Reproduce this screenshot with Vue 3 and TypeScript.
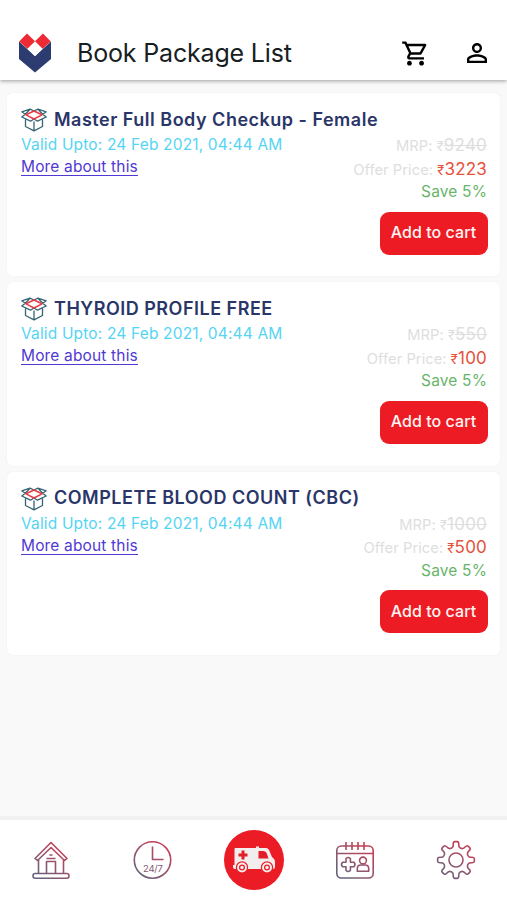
<script setup lang="ts">
interface HealthPackage {
  name: string
  validUpto: string
  mrp: number
  offer: number
  save: number
}

const packages: HealthPackage[] = [
  { name: 'Master Full Body Checkup - Female', validUpto: '24 Feb 2021, 04:44 AM', mrp: 9240, offer: 3223, save: 5 },
  { name: 'THYROID PROFILE FREE', validUpto: '24 Feb 2021, 04:44 AM', mrp: 550, offer: 100, save: 5 },
  { name: 'COMPLETE BLOOD COUNT (CBC)', validUpto: '24 Feb 2021, 04:44 AM', mrp: 1000, offer: 500, save: 5 },
]

// Outline of an eight-toothed gear centred on (20, 20).
function gearPath(): string {
  const at = (r: number, deg: number): string => {
    const a = (deg * Math.PI) / 180
    return `${(20 + r * Math.sin(a)).toFixed(2)} ${(20 - r * Math.cos(a)).toFixed(2)}`
  }
  let d = `M${at(13.2, -15)}`
  for (let i = 0; i < 8; i++) {
    const c = i * 45
    d += ` Q${at(14, c - 11)} ${at(15.8, c - 10)} Q${at(18.4, c - 9)} ${at(18.4, c - 4)}`
    d += ` L${at(18.4, c + 4)} Q${at(18.4, c + 9)} ${at(15.8, c + 10)}`
    d += ` Q${at(14, c + 11)} ${at(13.2, c + 15)} Q${at(12.2, c + 22.5)} ${at(13.2, c + 30)}`
  }
  return d + 'Z'
}
const gear = gearPath()
</script>

<template>
  <div class="screen">
    <header class="bar">
      <svg class="logo" viewBox="0 0 34 40" width="34" height="40">
        <path d="M1 8.500V26L17 39.500L33 26V8.500L17 23Z" fill="#2c3c71" />
        <path d="M17 9L24.500 16L17 23.200L9.500 16Z" fill="#fff" />
        <path d="M9 .5L17 8.200L9.400 15.800L1.200 8.400ZM25 .5L17 8.200L24.600 15.800L32.800 8.400Z" fill="#ee2b34" />
      </svg>
      <h1>Book Package List</h1>
      <svg class="cart" viewBox="0 0 24 24" width="29" height="29">
        <path d="M15.550 13c.75 0 1.410-.41 1.750-1.030l3.580-6.490A.996.996 0 0 0 20.010 4H5.210l-.94-2H1v2h2l3.600 7.590-1.350 2.440C4.520 15.370 5.480 17 7 17h12v-2H7l1.100-2h7.450zM6.160 6h12.150l-2.760 5H8.530L6.160 6zM7 18c-1.100 0-1.990.9-1.990 2S5.900 22 7 22s2-.9 2-2-.9-2-2-2zm10 0c-1.100 0-1.990.9-1.990 2s.89 2 1.990 2 2-.9 2-2-.9-2-2-2z" />
      </svg>
      <svg class="person" viewBox="0 0 24 24" width="30" height="30">
        <path d="M12 5.900a2.100 2.100 0 1 1 0 4.200 2.100 2.100 0 0 1 0-4.200m0 9c2.970 0 6.100 1.460 6.100 2.100v1.100H5.900V17c0-.64 3.130-2.100 6.100-2.100M12 4C9.790 4 8 5.790 8 8s1.790 4 4 4 4-1.790 4-4-1.790-4-4-4zm0 9c-2.670 0-8 1.340-8 4v3h16v-3c0-2.660-5.330-4-8-4z" />
      </svg>
    </header>

    <main class="list">
      <article v-for="p in packages" :key="p.name" class="card">
        <div class="heading">
          <svg viewBox="0 0 26 24" width="26" height="24" fill="none" stroke-width="1.300" stroke-linejoin="round">
            <path d="M4.500 11.500V18.500L13 22.800L21.500 18.500V11.500M13 13.500V22.800M4.300 6.200L9 1.200L13 3L17 1.200L21.700 6.200M4.300 6.200L.8 3.800L9 1.200M21.700 6.200L25.200 3.800L17 1.200M4.300 6.200L.8 9L9.500 13.200L13 11M21.700 6.200L25.200 9L16.500 13.200L13 11" stroke="#356473" />
            <path d="M13 3L21 6.800L13 11L5 6.800Z" stroke="#ea3b43" stroke-width="1.500" />
          </svg>
          <h2>{{ p.name }}</h2>
        </div>
        <div class="details">
          <div class="info">
            <p class="valid">Valid Upto: {{ p.validUpto }}</p>
            <a class="more">More about this</a>
          </div>
          <div class="prices">
            <p class="line mrp">MRP: <span class="rupee">₹</span><s>{{ p.mrp }}</s></p>
            <p class="line offer">Offer Price: <b><span class="rupee">₹</span>{{ p.offer }}</b></p>
            <p class="line save">Save {{ p.save }}%</p>
            <button type="button">Add to cart</button>
          </div>
        </div>
      </article>
    </main>

    <nav class="tabs">
      <svg viewBox="0 0 40 40" width="40" height="40" class="tab">
        <defs>
          <linearGradient id="tint" gradientUnits="userSpaceOnUse" x1="8" y1="36" x2="30" y2="6">
            <stop offset="0" stop-color="#69627b" />
            <stop offset=".55" stop-color="#9b536b" />
            <stop offset="1" stop-color="#c63e55" />
          </linearGradient>
        </defs>
        <path d="M4 18.500L20 2.500L36 18.500L33.500 20.500L20 7.500L6.500 20.500ZM7.500 20V33M32.500 20V33M15.500 33V21.500H24.500V33M18.500 15H21.500M15.500 18.500H24.500" />
        <rect x="2" y="33.500" width="36" height="4.800" rx="2.200" />
      </svg>
      <svg viewBox="0 0 40 40" width="40" height="40" class="tab">
        <circle cx="20.500" cy="20" r="18.200" />
        <path d="M20.500 6.500V19.500H31.500" />
        <text x="20.800" y="31.500" text-anchor="middle">24/7</text>
      </svg>
      <div class="emergency">
        <svg viewBox="0 0 44 30" width="44" height="30">
          <path d="M3 3H24V1.500H27V3H34Q36 3 37 5L40 12L42 14Q43 15 43 17V22Q43 24 41 24H3Q1 24 1 22V20H2.500V5Q2.500 3 3 3Z" fill="#f3eeee" />
          <path d="M26.500 6H31Q34 6 35 9L36.500 13.500H26.500ZM9.500 5.500H12.500V8.500H15.500V11.500H12.500V14.500H9.500V11.500H6.500V8.500H9.500Z" fill="#e21f29" />
          <g fill="#f3eeee" stroke="#ec1c26" stroke-width="1.200">
            <circle cx="10" cy="22.500" r="5.600" />
            <circle cx="35" cy="22.500" r="5.600" />
            <circle cx="10" cy="22.500" r="2.400" />
            <circle cx="35" cy="22.500" r="2.400" />
          </g>
        </svg>
      </div>
      <svg viewBox="0 0 40 40" width="40" height="40" class="tab">
        <rect x="1.800" y="6" width="36.400" height="32" rx="4.500" />
        <path d="M2 13.500H38M11 2V10M17 2V10M23 2V10M29 2V10" />
        <path d="M11 18.500Q13.200 16.500 15.400 18.500V22.300H19Q21 24.500 19 26.700H15.400V30.500Q13.200 32.500 11 30.500V26.700H7.500Q5.500 24.500 7.500 22.300H11Z" />
        <circle cx="28" cy="20.500" r="3.400" />
        <path d="M22.300 31.200V28.500Q22.300 25 26 25H30Q33.700 25 33.700 28.500V31.200Z" />
      </svg>
      <svg viewBox="0 0 40 40" width="40" height="40" class="tab">
        <path :d="gear" />
        <circle cx="20" cy="20" r="7" />
      </svg>
    </nav>
  </div>
</template>

<style>
body {
  margin: 0;
  background: #f9f9f9;
}
</style>

<style scoped>
.screen {
  display: flex;
  flex-direction: column;
  width: 507px;
  height: 900px;
  overflow: hidden;
  background: #f9f9f9;
  font-family: Inter, 'Liberation Sans', sans-serif;
}
.bar {
  box-sizing: border-box;
  display: flex;
  align-items: center;
  flex: none;
  height: 80px;
  padding: 26px 16px 0 18px;
  background: #fff;
  box-shadow: 0 1px 4px rgba(0, 0, 0, 0.38);
}
h1 {
  flex: 1;
  margin: 0 0 0 25px;
  font-size: 25px;
  font-weight: 400;
  line-height: 32px;
  letter-spacing: -0.170px;
  color: #17201f;
}
.cart {
  margin-right: 32px;
}
.person {
  margin-right: -0.500px;
}
.list {
  display: flex;
  flex: 1;
  flex-direction: column;
  gap: 6px;
  padding: 13px 7px 0;
}
.card {
  box-sizing: border-box;
  height: 183.400px;
  padding: 14px 12.500px 0 14px;
  background: #fff;
  border-radius: 6px;
  box-shadow: 0 0 2px rgba(0, 0, 0, 0.06);
}
.heading {
  display: flex;
  align-items: center;
  gap: 7px;
  height: 25px;
}
.heading svg {
  margin-top: 1px;
}
h2 {
  margin: 0;
  font-size: 18px;
  font-weight: 600;
  line-height: 24px;
  letter-spacing: 0.500px;
  white-space: nowrap;
  color: #2a3568;
}
.details {
  display: flex;
  justify-content: space-between;
}
.valid {
  margin: 0;
  padding-top: 1px;
  font-size: 15.500px;
  line-height: 23px;
  letter-spacing: 0.160px;
  color: #55d4f3;
}
.more {
  display: inline-block;
  font-size: 15.500px;
  line-height: 17px;
  letter-spacing: 0.160px;
  color: #5039d2;
  border-bottom: 1px solid #5039d2;
}
.prices {
  display: flex;
  flex-direction: column;
  align-items: flex-end;
  padding-top: 2px;
}
.line {
  margin: 0 0.500px 0 0;
  font-size: 14.700px;
  line-height: 22.500px;
  letter-spacing: 0.050px;
  color: #dedede;
}
.line s,
.line b {
  font-size: 17px;
  font-weight: 400;
  letter-spacing: 0.200px;
}
.line b {
  color: #e5513a;
}
.line.save {
  font-size: 15.500px;
  letter-spacing: 0.150px;
  color: #68b56a;
}
.rupee {
  font-size: 13px;
}
button {
  width: 108px;
  height: 43px;
  margin-top: 8px;
  padding: 0 0 2px;
  border: 0;
  border-radius: 9px;
  background: #ed1b24;
  font: 500 16px Inter, 'Liberation Sans', sans-serif;
  letter-spacing: 0.050px;
  color: #fff4f2;
}
.tabs {
  box-sizing: border-box;
  display: grid;
  grid-template-columns: repeat(5, 1fr);
  align-items: center;
  justify-items: center;
  flex: none;
  height: 84px;
  border-top: 4px solid #f1f1f1;
  background: #fff;
}
.tab {
  fill: none;
  stroke: url(#tint);
  stroke-width: 1.600;
  stroke-linejoin: round;
}
.tab text {
  fill: #86596f;
  stroke: none;
  font-size: 9.500px;
  letter-spacing: -0.300px;
}
.emergency {
  display: grid;
  place-items: center;
  width: 60px;
  height: 60px;
  margin-left: 1px;
  border-radius: 50%;
  background: #ec1c26;
}
</style>
